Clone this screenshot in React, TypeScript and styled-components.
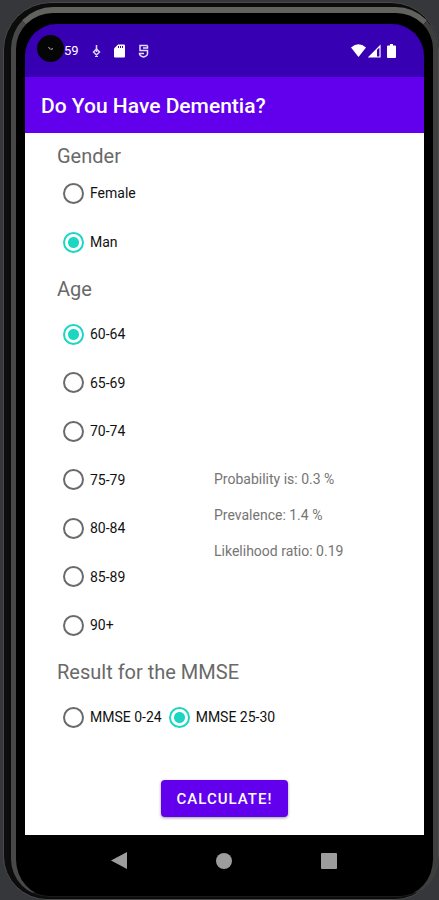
import React, { useState } from "react";
import styled, { createGlobalStyle } from "styled-components";

const GlobalStyle = createGlobalStyle`
  * { box-sizing: border-box; }
  html, body { margin: 0; background: #35373a; }
  body { font-family: Roboto, "Liberation Sans", sans-serif; color: #111; }
`;

const Stage = styled.div`
  min-height: 100vh;
  padding: 2px 0 0 3px;
  display: flex;
`;

const Shell = styled.div`
  flex: 1;
  display: flex;
  padding: 4px 0 2px 7px;
  border: 1px solid #4a4a4a;
  border-radius: 48px 48px 44px 44px;
  background: #0c0c0c;
`;

const Bezel = styled.div`
  flex: 1;
  display: flex;
  border: solid #484848;
  border-width: 6px 5px 1px 5px;
  border-top-color: #62625f;
  border-right-color: #3e3e3e;
  border-bottom-color: #1c1c1c;
  border-radius: 42px 42px 38px 38px;
  background: #000;
  padding: 11px 9px 0 9px;
`;

const Screen = styled.div`
  flex: 1;
  display: flex;
  flex-direction: column;
  border-radius: 32px;
  overflow: hidden;
`;

const StatusBar = styled.div`
  height: 53px;
  padding: 0 28px 0 12px;
  display: flex;
  align-items: center;
  justify-content: space-between;
  background: #3700b3;
  color: #fff;
`;

const StatusGroup = styled.div<{ $gap: number }>`
  display: flex;
  align-items: center;
  gap: ${(p) => p.$gap}px;
`;

const Clock = styled.div`
  display: flex;
  align-items: center;
  font-size: 13px;
  line-height: 16px;
`;

const Camera = styled.svg`
  display: block;
  width: 27px;
  height: 27px;
  margin-top: -4px;
`;

const Glyph = styled.svg`
  display: block;
`;

const AppBar = styled.header`
  height: 56px;
  padding: 0 16px;
  display: flex;
  align-items: center;
  background: #6200ee;
  color: #fff;
`;

const Title = styled.h1`
  margin: 0;
  padding-top: 2px;
  font-size: 21px;
  line-height: 24px;
  font-weight: 500;
`;

const Form = styled.form`
  flex: 1;
  display: flex;
  flex-direction: column;
  padding: 10px 32px 18px;
  background: #fff;
`;

const Group = styled.fieldset<{ $after?: number }>`
  margin: 0 0 ${(p) => p.$after ?? 0}px;
  padding: 0;
  border: 0;
  min-width: 0;
`;

const Legend = styled.legend`
  padding: 0;
  font-size: 20px;
  line-height: 26px;
  font-weight: 400;
  color: #696969;
`;

const Options = styled.div<{ $row?: boolean; $before?: number; $minHeight?: number }>`
  display: flex;
  flex-direction: ${(p) => (p.$row ? "row" : "column")};
  align-items: flex-start;
  justify-content: ${(p) => (p.$row ? "flex-start" : "space-between")};
  gap: ${(p) => (p.$row ? "7px" : "0")};
  min-height: ${(p) => p.$minHeight ?? 0}px;
  padding-left: 6px;
  padding-top: ${(p) => p.$before ?? 0}px;
`;

const Option = styled.label`
  height: 48px;
  display: flex;
  align-items: center;
  gap: 6px;
  font-size: 14px;
  line-height: 18px;
  white-space: nowrap;
`;

const Radio = styled.input`
  appearance: none;
  width: 21px;
  height: 21px;
  margin: 0;
  border: 2px solid #6a6a6a;
  border-radius: 50%;
  background: #fff;

  &:checked {
    border-color: #1bd6c5;
    background: radial-gradient(circle, #1bd6c5 5px, #fff 6px);
  }
`;

const AgeRow = styled.div`
  display: grid;
  grid-template-columns: 157px 1fr;
  margin-bottom: 10px;
`;

const Results = styled.div`
  align-self: start;
  padding-top: 194px;
  font-size: 14px;
  line-height: 18px;
  color: #757575;
`;

const Result = styled.p`
  margin: 0 0 18px;
`;

const Calculate = styled.button`
  align-self: center;
  height: 37px;
  margin-top: auto;
  padding: 0 16px;
  border: 0;
  border-radius: 4px;
  background: #6200ee;
  color: #fff;
  font-family: inherit;
  font-size: 15px;
  font-weight: 500;
  letter-spacing: 1px;
  box-shadow: 0 1px 3px rgba(0, 0, 0, 0.4);
`;

const NavBar = styled.nav`
  height: 61px;
  padding: 0 87px 10px 86px;
  display: flex;
  align-items: center;
  justify-content: space-between;
  background: #000;
`;

const NavButton = styled.button`
  display: flex;
  padding: 0;
  border: 0;
  background: none;
`;

type ChoiceProps = {
  name: string;
  items: string[];
  initial: string;
  row?: boolean;
  before?: number;
  minHeight?: number;
};

function Choices({ name, items, initial, row, before, minHeight }: ChoiceProps) {
  const [value, setValue] = useState(initial);
  return (
    <Options $row={row} $before={before} $minHeight={minHeight}>
      {items.map((item) => (
        <Option key={item}>
          <Radio type="radio" name={name} value={item} checked={value === item} onChange={() => setValue(item)} />
          {item}
        </Option>
      ))}
    </Options>
  );
}

const AGES = ["60-64", "65-69", "70-74", "75-79", "80-84", "85-89", "90+"];
const RESULTS = ["Probability is: 0.3 %", "Prevalence: 1.4 %", "Likelihood ratio: 0.19"];

export default function App() {
  return (
    <>
      <GlobalStyle />
      <Stage>
        <Shell>
          <Bezel>
            <Screen>
              <StatusBar>
                <StatusGroup $gap={13}>
                  <Clock>
                    <Camera viewBox="0 0 27 27" aria-hidden="true">
                      <circle cx="13.5" cy="13.5" r="13.5" fill="#050505" />
                      <path d="M11.5 12l2 2.500M14.500 15l1-2" stroke="#999" strokeWidth="1.200" fill="none" />
                    </Camera>
                    59
                  </Clock>
                  <Glyph width="9" height="14" viewBox="0 0 9 14" aria-hidden="true">
                    <path d="M4.500 1v7" stroke="#ddd5ff" strokeWidth="1.500" />
                    <path d="M4.500 5L7.500 8L4.500 11L1.500 8z" fill="none" stroke="#ddd5ff" strokeWidth="1.500" />
                    <path d="M3 12.500h3" stroke="#ddd5ff" />
                  </Glyph>
                  <Glyph width="11" height="14" viewBox="0 0 11 14" aria-hidden="true">
                    <path fill="#fff" d="M4 0.500h6q1 0 1 1v11q0 1-1 1H1q-1 0-1-1V4.500z" />
                    <path d="M4.500 2v2M6.500 2v2M8.500 2v2" stroke="#3700b3" />
                  </Glyph>
                  <Glyph width="11" height="14" viewBox="0 0 11 14" aria-hidden="true">
                    <path
                      d="M9.500 1.500H2v5h7.500v3Q9.500 12 5.500 13 1.500 12 1.500 9.500H6M9.500 1.500V4H5"
                      fill="none"
                      stroke="#e3dcff"
                      strokeWidth="1.500"
                    />
                  </Glyph>
                </StatusGroup>
                <StatusGroup $gap={2}>
                  <Glyph width="15" height="13" viewBox="0 0 15 13" aria-hidden="true">
                    <path fill="#fff" d="M0 3.500Q7.500-3 15 3.500L7.500 13z" />
                  </Glyph>
                  <Glyph width="13" height="14" viewBox="0 0 13 14" aria-hidden="true">
                    <path d="M12 2v11H1z" fill="none" stroke="#fff" strokeWidth="1.200" />
                    <path fill="#fff" d="M9 5v8H1z" />
                  </Glyph>
                  <Glyph width="13" height="14" viewBox="2 0 13 14" aria-hidden="true">
                    <path fill="#fff" d="M9 0h3v1.500h2q1 0 1 1V13q0 1-1 1H7q-1 0-1-1V2.500q0-1 1-1h2z" />
                  </Glyph>
                </StatusGroup>
              </StatusBar>
              <AppBar>
                <Title>Do You Have Dementia?</Title>
              </AppBar>
              <Form onSubmit={(e) => e.preventDefault()}>
                <Group $after={10}>
                  <Legend>Gender</Legend>
                  <Choices name="gender" items={["Female", "Man"]} initial="Man" minHeight={97} />
                </Group>
                <AgeRow>
                  <Group>
                    <Legend>Age</Legend>
                    <Choices name="age" items={AGES} initial="60-64" before={8} minHeight={347} />
                  </Group>
                  <Results>
                    {RESULTS.map((text) => (
                      <Result key={text}>{text}</Result>
                    ))}
                  </Results>
                </AgeRow>
                <Group $after={10}>
                  <Legend>Result for the MMSE</Legend>
                  <Choices name="mmse" items={["MMSE 0-24", "MMSE 25-30"]} initial="MMSE 25-30" row before={8} />
                </Group>
                <Calculate type="submit">CALCULATE!</Calculate>
              </Form>
              <NavBar>
                <NavButton type="button" aria-label="Back">
                  <Glyph width="17" height="17" viewBox="0 0 17 17">
                    <path fill="#9c9c9c" d="M0 8.500L16 0v17z" />
                  </Glyph>
                </NavButton>
                <NavButton type="button" aria-label="Home">
                  <Glyph width="16" height="16" viewBox="0 0 16 16">
                    <circle cx="8" cy="8" r="8" fill="#9c9c9c" />
                  </Glyph>
                </NavButton>
                <NavButton type="button" aria-label="Overview">
                  <Glyph width="17" height="17" viewBox="0 0 17 17">
                    <rect x="1" y="1" width="16" height="16" rx="1" fill="#9c9c9c" />
                  </Glyph>
                </NavButton>
              </NavBar>
            </Screen>
          </Bezel>
        </Shell>
      </Stage>
    </>
  );
}
